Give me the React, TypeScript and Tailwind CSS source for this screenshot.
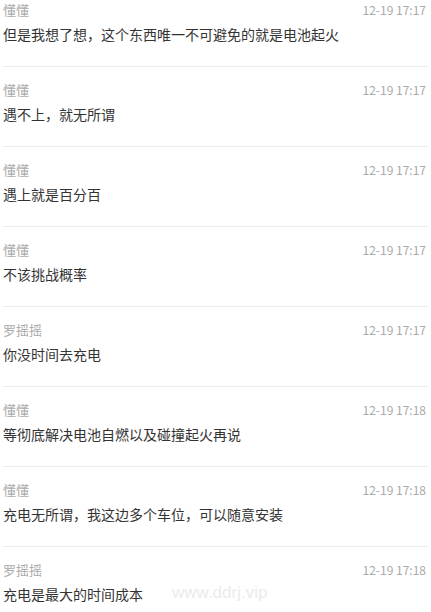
import React from 'react';

const comments = [
    { name: '懂懂', time: '12-19 17:17', text: '但是我想了想，这个东西唯一不可避免的就是电池起火' },
    { name: '懂懂', time: '12-19 17:17', text: '遇不上，就无所谓' },
    { name: '懂懂', time: '12-19 17:17', text: '遇上就是百分百' },
    { name: '懂懂', time: '12-19 17:17', text: '不该挑战概率' },
    { name: '罗摇摇', time: '12-19 17:17', text: '你没时间去充电' },
    { name: '懂懂', time: '12-19 17:18', text: '等彻底解决电池自燃以及碰撞起火再说' },
    { name: '懂懂', time: '12-19 17:18', text: '充电无所谓，我这边多个车位，可以随意安装' },
    { name: '罗摇摇', time: '12-19 17:18', text: '充电是最大的时间成本' },
];

const App: React.FC = () => {
    return (
        <div
            className="relative w-full min-h-screen bg-white overflow-hidden px-[3px]"
            style={{ fontFamily: '"Microsoft YaHei", "Noto Sans CJK SC", sans-serif' }}
        >
            {comments.map((c, idx) => (
                <div key={idx} className="mb-[13px] pb-5 border-b border-[#ececec]">
                    <div className="flex items-center justify-between h-5 leading-5">
                        <span className="text-[13px] text-[#aaaaaa]">{c.name}</span>
                        <span className="text-[12px] text-[#aaaaaa] pr-[2px]">{c.time}</span>
                    </div>
                    <p className="mt-[2px] text-[14px] leading-6 text-[#333333]">{c.text}</p>
                </div>
            ))}

            {/* watermark */}
            <div className="absolute left-[172px] top-[581px] text-[17px] leading-6 text-[#ebebeb] font-['Liberation_Sans',sans-serif] pointer-events-none">
                www.ddrj.vip
            </div>
        </div>
    );
};

export default App;
